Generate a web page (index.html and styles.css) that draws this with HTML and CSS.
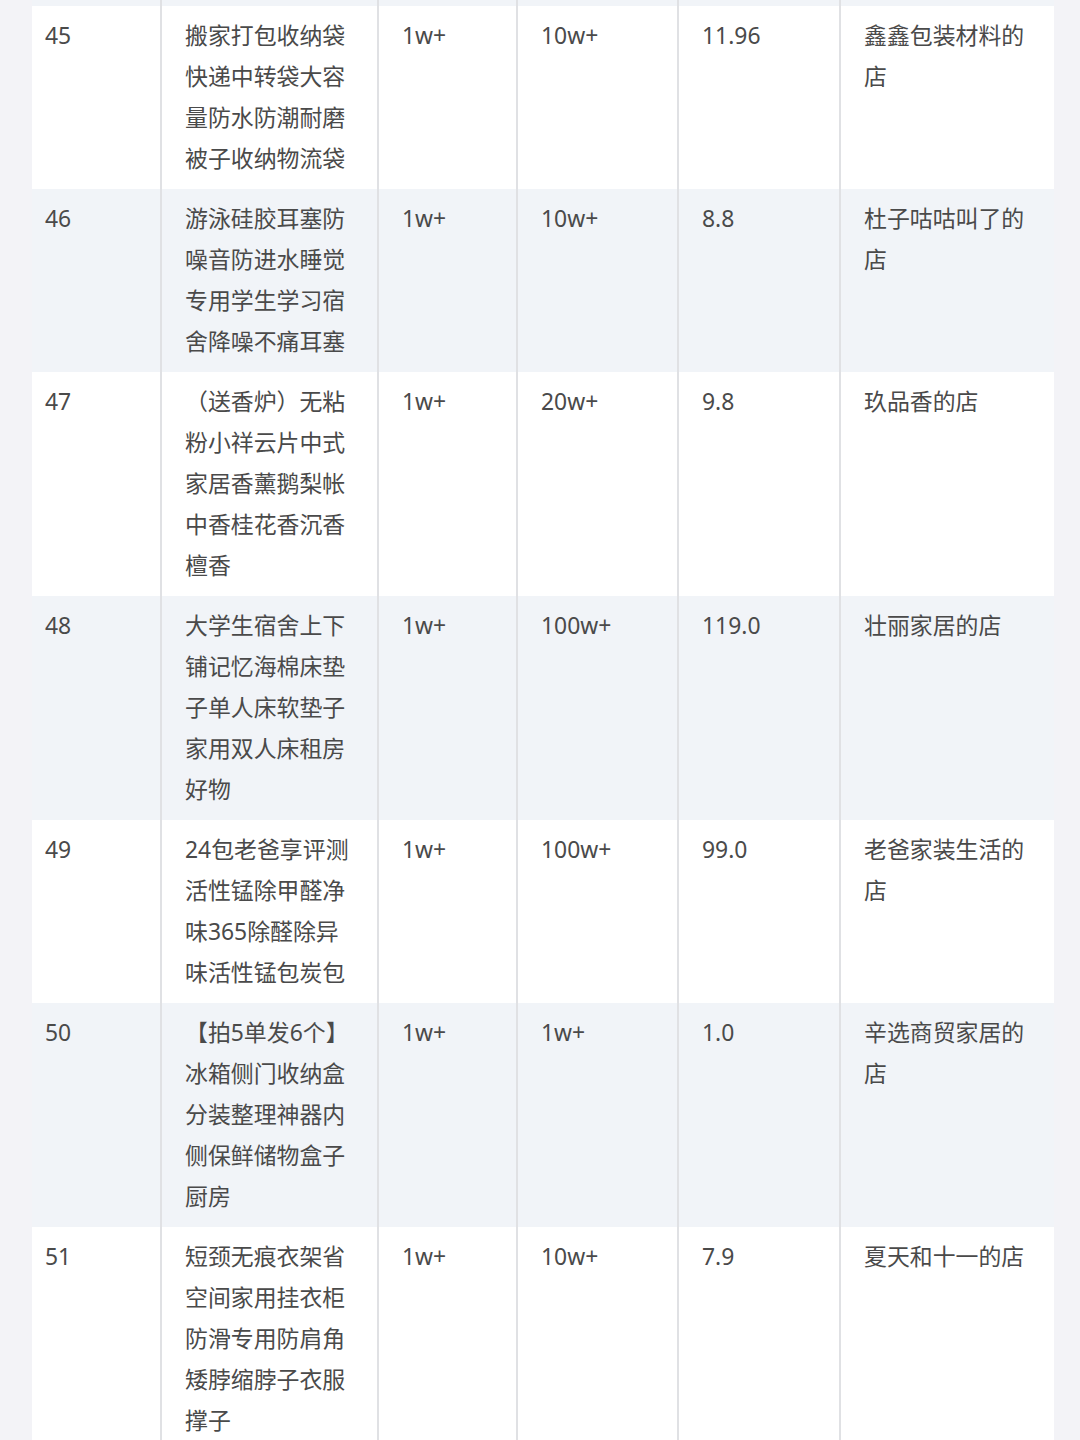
FILE: index.html
```html
<!DOCTYPE html>
<html lang="zh-CN">
<head>
<meta charset="utf-8">
<title>商品列表</title>
<link rel="stylesheet" href="styles.css">
</head>
<body>
<div class="page">
<table class="goods">
<colgroup>
<col class="c1"><col class="c2"><col class="c3"><col class="c4"><col class="c5"><col class="c6">
</colgroup>
<tbody>
<tr class="alt spacer"><td></td><td></td><td></td><td></td><td></td><td></td></tr>
<tr><td>45</td><td>搬家打包收纳袋快递中转袋大容量防水防潮耐磨被子收纳物流袋</td><td>1w+</td><td>10w+</td><td>11.96</td><td>鑫鑫包装材料的店</td></tr>
<tr class="alt"><td>46</td><td>游泳硅胶耳塞防噪音防进水睡觉专用学生学习宿舍降噪不痛耳塞</td><td>1w+</td><td>10w+</td><td>8.8</td><td>杜子咕咕叫了的店</td></tr>
<tr><td>47</td><td>（送香炉）无粘粉小祥云片中式家居香薰鹅梨帐中香桂花香沉香檀香</td><td>1w+</td><td>20w+</td><td>9.8</td><td>玖品香的店</td></tr>
<tr class="alt"><td>48</td><td>大学生宿舍上下铺记忆海棉床垫子单人床软垫子家用双人床租房好物</td><td>1w+</td><td>100w+</td><td>119.0</td><td>壮丽家居的店</td></tr>
<tr><td>49</td><td>24包老爸享评测活性锰除甲醛净味365除醛除异味活性锰包炭包</td><td>1w+</td><td>100w+</td><td>99.0</td><td>老爸家装生活的店</td></tr>
<tr class="alt"><td>50</td><td>【拍5单发6个】冰箱侧门收纳盒分装整理神器内侧保鲜储物盒子厨房</td><td>1w+</td><td>1w+</td><td>1.0</td><td>辛选商贸家居的店</td></tr>
<tr><td>51</td><td>短颈无痕衣架省空间家用挂衣柜防滑专用防肩角矮脖缩脖子衣服撑子</td><td>1w+</td><td>10w+</td><td>7.9</td><td>夏天和十一的店</td></tr>
</tbody>
</table>
</div>
</body>
</html>
```
FILE: styles.css
```css
html, body {
  margin: 0;
  padding: 0;
  background: #f3f3f7;
}
.page {
  padding-left: 32px;
  width: 1022px;
  height: 1440px;
  overflow: hidden;
}
.goods {
  width: 1022px;
  table-layout: fixed;
  border-collapse: collapse;
  font-family: "Noto Sans", "Noto Sans CJK SC", sans-serif;
  font-size: 22.9px;
  line-height: 41px;
  color: #4a4a4a;
}
.c1 { width: 129px; }
.c2 { width: 217px; }
.c3 { width: 139px; }
.c4 { width: 161px; }
.c5 { width: 162px; }
.c6 { width: 214px; }
.goods tr { background: #ffffff; }
.goods tr.alt { background: #f1f4f8; }
.goods td {
  vertical-align: top;
  padding: 9px 22px 10px 23px;
  border-left: 2px solid #e0e1e4;
  word-break: break-all;
}
.goods td:first-child {
  border-left: none;
  padding-left: 13px;
}
.goods tr.spacer td {
  height: 6px;
  padding: 0;
  line-height: 0;
}
```
